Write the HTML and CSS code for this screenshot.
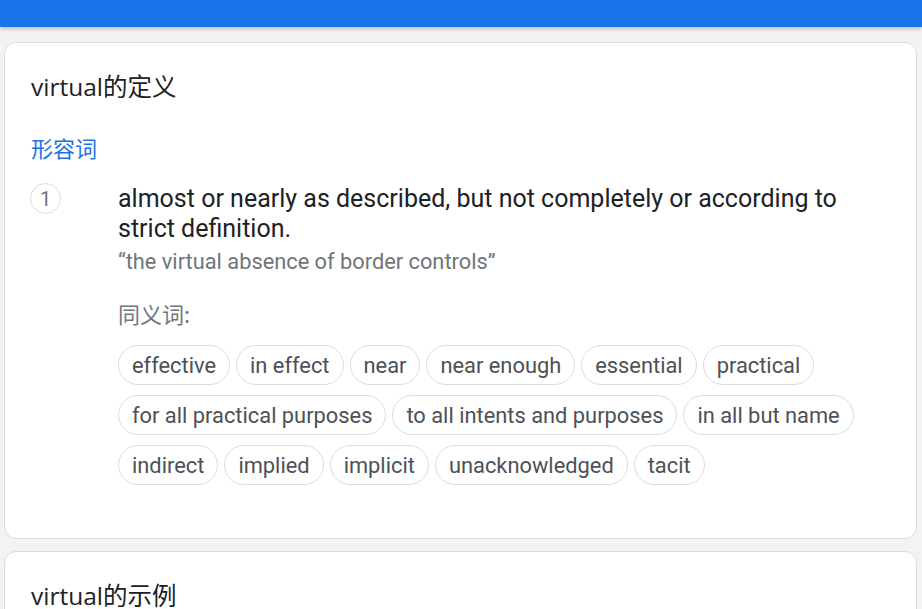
FILE: index.html
```html
<!DOCTYPE html>
<html lang="zh-CN">
<head>
<meta charset="utf-8">
<link rel="stylesheet" href="styles.css">
</head>
<body>
<div class="topbar"></div>
<main class="main">
  <section class="card">
    <h2 class="card-title">virtual的定义</h2>
    <div class="pos">形容词</div>
    <div class="sense">
      <div class="num">1</div>
      <div class="sense-body">
        <div class="def">almost or nearly as described, but not completely or according to strict definition.</div>
        <div class="example">“the virtual absence of border controls”</div>
        <div class="syn-label">同义词:</div>
        <div class="chips">
          <span class="chip">effective</span>
          <span class="chip">in effect</span>
          <span class="chip">near</span>
          <span class="chip">near enough</span>
          <span class="chip">essential</span>
          <span class="chip">practical</span>
          <span class="chip">for all practical purposes</span>
          <span class="chip">to all intents and purposes</span>
          <span class="chip">in all but name</span>
          <span class="chip">indirect</span>
          <span class="chip">implied</span>
          <span class="chip">implicit</span>
          <span class="chip">unacknowledged</span>
          <span class="chip">tacit</span>
        </div>
      </div>
    </div>
  </section>
  <section class="card">
    <h2 class="card-title">virtual的示例</h2>
  </section>
</main>
</body>
</html>
```

FILE: styles.css
```css
html, body {
  margin: 0;
  padding: 0;
}
body {
  background: #f3f3f3;
  font-family: Roboto, "Noto Sans CJK SC", sans-serif;
  color: #202124;
  overflow: hidden;
}
.topbar {
  height: 27px;
  background: #1a73e8;
  box-shadow: 0 1px 5px rgba(0, 0, 0, 0.3);
  position: relative;
  z-index: 1;
}
.main {
  padding: 15px 5px 0 4px;
  display: flex;
  flex-direction: column;
  gap: 12px;
}
.card {
  background: #fff;
  border: 1px solid #dadce0;
  border-radius: 12px;
  padding: 28px 26px 53px 26px;
}
.card-title {
  margin: 0;
  font-family: "Open Sans", "Noto Sans CJK SC", sans-serif;
  font-weight: 400;
  font-size: 24.5px;
  line-height: 32px;
  color: #202124;
}
.pos {
  margin-top: 30px;
  font-family: "Noto Sans CJK SC", sans-serif;
  font-size: 22px;
  line-height: 28px;
  color: #1a73e8;
}
.sense {
  display: flex;
  margin-top: 23px;
}
.num {
  flex: none;
  box-sizing: border-box;
  width: 31px;
  height: 31px;
  border: 1px solid #dadce0;
  border-radius: 50%;
  display: flex;
  align-items: center;
  justify-content: center;
  font-size: 20px;
  color: #70757a;
  margin-left: -1px;
  margin-top: -1px;
}
.sense-body {
  margin-left: 57px;
  flex: 1;
}
.def {
  font-size: 25px;
  line-height: 30px;
  color: #202124;
}
.example {
  font-size: 21.8px;
  line-height: 28px;
  color: #70757a;
  margin-top: 4px;
}
.syn-label {
  margin-top: 23px;
  font-family: "Noto Sans CJK SC", sans-serif;
  font-size: 22px;
  line-height: 28px;
  color: #70757a;
}
.chips {
  margin-top: 18px;
  display: flex;
  flex-wrap: wrap;
  gap: 10px 6px;
}
.chip {
  box-sizing: border-box;
  border: 1px solid #dadce0;
  border-radius: 20px;
  height: 40px;
  padding: 0 13px;
  display: flex;
  align-items: center;
  font-size: 21.85px;
  color: #4d5156;
}
```
